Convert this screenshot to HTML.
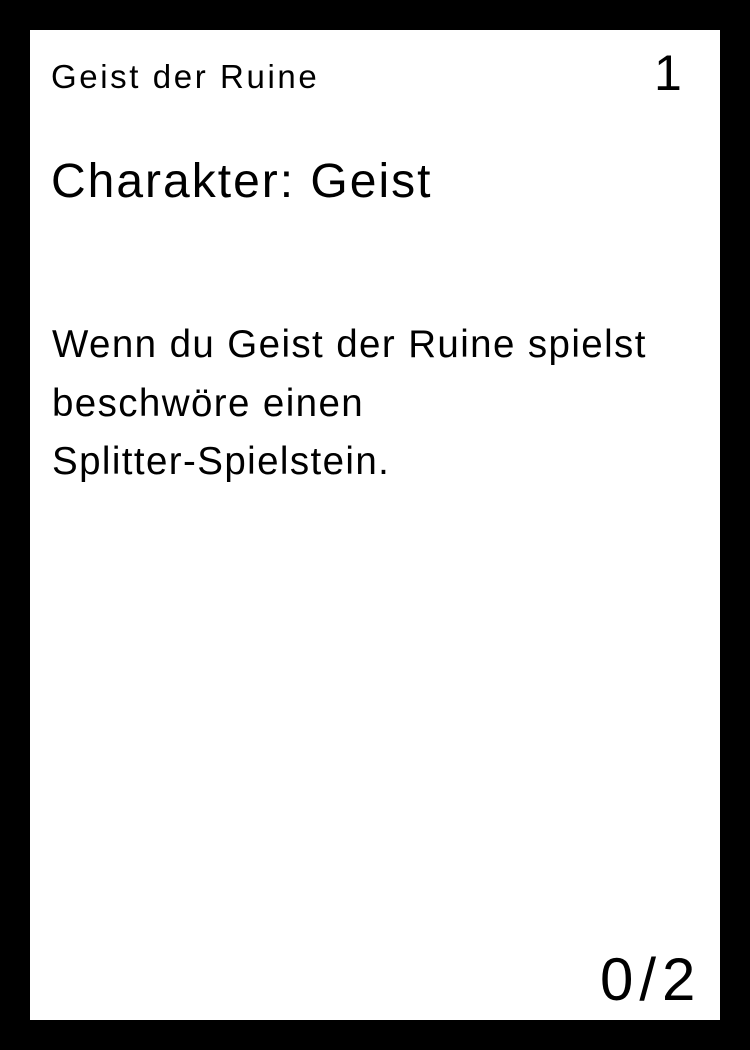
<!DOCTYPE html>
<html><head><meta charset="utf-8"><style>
html,body{margin:0;padding:0;}
body{width:750px;height:1050px;background:#000;position:relative;overflow:hidden;font-family:"Liberation Sans","DejaVu Sans",sans-serif;color:#000;}
.card{position:absolute;left:30px;top:30px;width:690px;height:990px;background:#fff;}
.t{position:absolute;white-space:nowrap;line-height:1;}
</style></head><body>
<div class="card"></div>
<div class="t" style="left:51px;top:60px;font-size:33px;letter-spacing:2.6px;">Geist der Ruine</div>
<div class="t" style="left:654px;top:48px;font-size:50px;">1</div>
<div class="t" style="left:51px;top:158px;font-size:48px;letter-spacing:2px;">Charakter: Geist</div>
<div class="t" style="left:52px;top:316px;font-size:38.5px;line-height:58.5px;white-space:normal;width:690px;letter-spacing:1.4px;">Wenn du Geist der Ruine spielst<br>beschwöre einen<br>Splitter-Spielstein.</div>
<div class="t" style="left:600px;top:950px;font-size:60px;letter-spacing:6px;">0/2</div>
</body></html>
